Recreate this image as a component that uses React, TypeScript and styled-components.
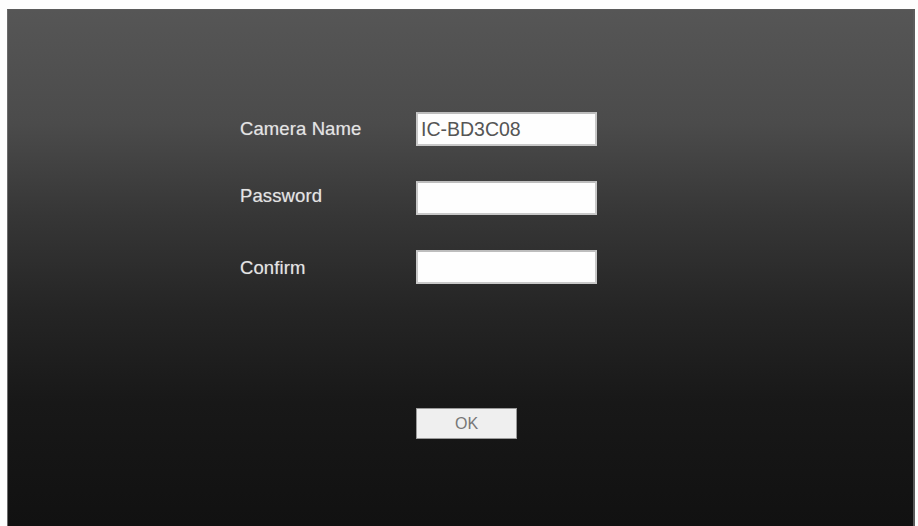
import { Fragment } from 'react';
import styled, { createGlobalStyle } from 'styled-components';

const Global = createGlobalStyle`
  html, body {
    margin: 0;
    padding: 0;
    background: #fdfdfd;
  }
  body {
    font-family: "Liberation Sans", Arial, sans-serif;
  }
`;

const Page = styled.div`
  width: 918px;
  height: 526px;
  padding: 9px 3px 0 7px;
  box-sizing: border-box;
`;

const Panel = styled.div`
  height: 100%;
  box-sizing: border-box;
  border-left: 1px solid #6a6a6a;
  border-right: 2px solid #5c5c5c;
  border-top: 1px solid #5a5a5a;
  background: linear-gradient(
    to bottom,
    #565656 0%,
    #4b4b4b 22%,
    #363636 40%,
    #252525 58%,
    #181818 76%,
    #111111 100%
  );
  padding: 102px 0 0 232px;
  display: flex;
  flex-direction: column;
`;

const Form = styled.div`
  display: grid;
  grid-template-columns: 176px 181px;
  grid-auto-rows: 34px;
  row-gap: 35px;
  align-items: center;
`;

const Label = styled.label<{ $nudge?: number }>`
  color: #e4e4e4;
  font-size: 18.5px;
  letter-spacing: 0.1px;
  text-shadow: 0 0 1px rgba(255, 255, 255, 0.4);
  position: relative;
  top: ${(p) => p.$nudge ?? 0}px;
`;

const Field = styled.input`
  height: 34px;
  width: 181px;
  box-sizing: border-box;
  border: 2px solid #c8c8c8;
  border-top-color: #bdbdbd;
  background: #fefefe;
  padding: 0 3px;
  font-family: "Liberation Sans", Arial, sans-serif;
  font-size: 19.5px;
  color: #555;
  outline: none;
`;

const Actions = styled.div`
  margin-top: 124px;
  padding-left: 176px;
`;

const OkButton = styled.button`
  width: 101px;
  height: 31px;
  border: 1px solid #9a9a9a;
  background: #efefef;
  color: #777;
  font-family: "Liberation Sans", Arial, sans-serif;
  font-size: 16px;
  padding: 0;
  cursor: pointer;
`;

const rows = [
  { label: 'Camera Name', value: 'IC-BD3C08', nudge: 0 },
  { label: 'Password', value: '', nudge: -2 },
  { label: 'Confirm', value: '', nudge: 1 },
];

export default function App() {
  return (
    <>
      <Global />
      <Page>
        <Panel>
          <Form>
            {rows.map((r) => (
              <Fragment key={r.label}>
                <Label $nudge={r.nudge}>{r.label}</Label>
                <Field defaultValue={r.value} type="text" />
              </Fragment>
            ))}
          </Form>
          <Actions>
            <OkButton>OK</OkButton>
          </Actions>
        </Panel>
      </Page>
    </>
  );
}
